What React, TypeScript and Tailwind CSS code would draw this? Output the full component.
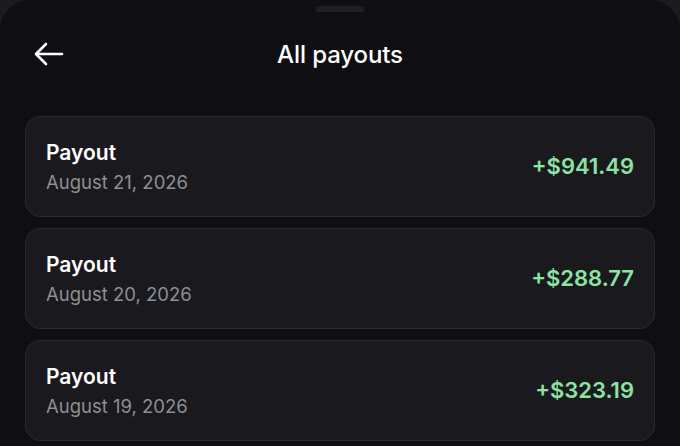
import React from "react";

const payouts = [
  { date: "August 21, 2026", amount: "+$941.49" },
  { date: "August 20, 2026", amount: "+$288.77" },
  { date: "August 19, 2026", amount: "+$323.19" },
];

export default function App() {
  return (
    <div
      className="w-[680px] h-[446px] bg-[#1b1b1f] overflow-hidden"
      style={{ fontFamily: "Inter, 'Noto Sans', sans-serif" }}
    >
      <div className="h-full bg-[#0f0f13] rounded-t-[30px] flex flex-col">
        <div className="flex justify-center pt-[6px]">
          <div className="w-[48px] h-[6px] rounded-full bg-[#1f1f24]" />
        </div>
        <div className="relative flex items-center justify-center h-[52px] mt-[17px]">
          <svg
            className="absolute left-[34px] top-[13px]"
            width="30"
            height="24"
            viewBox="0 0 30 24"
            fill="none"
            stroke="white"
            strokeWidth="2.6"
            strokeLinecap="round"
            strokeLinejoin="round"
          >
            <path d="M28 12H3" />
            <path d="M12 2L2 12l10 10" />
          </svg>
          <span className="text-white text-[24px] font-medium tracking-[-0.1px]">
            All payouts
          </span>
        </div>
        <div className="flex flex-col gap-[11px] px-[25px] mt-[35px]">
          {payouts.map((p) => (
            <div
              key={p.date}
              className="h-[101px] rounded-[15px] bg-[#1a1a1e] border border-[#2a2a2f] flex items-center justify-between pl-[20px] pr-[20px]"
            >
              <div className="flex flex-col">
                <span className="text-white text-[21px] leading-[28px] font-semibold">
                  Payout
                </span>
                <span className="text-[#8e8e94] text-[18.5px] leading-[24px] mt-[3px]">
                  {p.date}
                </span>
              </div>
              <span className="text-[#8de3a4] text-[22px] font-semibold">
                {p.amount}
              </span>
            </div>
          ))}
        </div>
      </div>
    </div>
  );
}
